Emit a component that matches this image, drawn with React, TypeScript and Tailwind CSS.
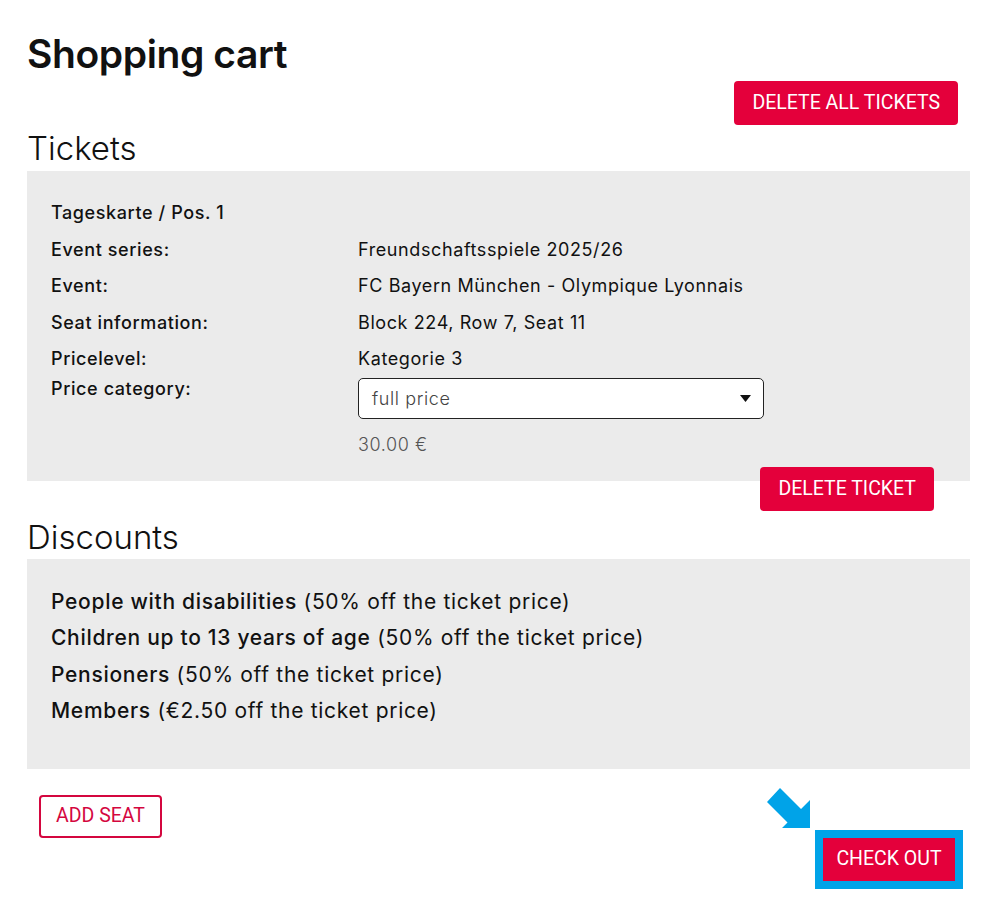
import React from "react";

const ROWS: [string, string][] = [
  ["Event series:", "Freundschaftsspiele 2025/26"],
  ["Event:", "FC Bayern München - Olympique Lyonnais"],
  ["Seat information:", "Block 224, Row 7, Seat 11"],
  ["Pricelevel:", "Kategorie 3"],
];

const DISCOUNTS: [string, string][] = [
  ["People with disabilities", "(50% off the ticket price)"],
  ["Children up to 13 years of age", "(50% off the ticket price)"],
  ["Pensioners", "(50% off the ticket price)"],
  ["Members", "(€2.50 off the ticket price)"],
];

const btnFont = { fontFamily: "Roboto, 'Liberation Sans', sans-serif" };

export default function App() {
  return (
    <div
      className="min-h-screen bg-white pl-[27px] pr-[30px] pt-[30px] text-[#111]"
      style={{ fontFamily: "Inter, 'Noto Sans', sans-serif" }}
    >
      {/* Title */}
      <h1 className="text-[39px] leading-[48px] font-semibold tracking-[-0.4px]">Shopping cart</h1>

      <div className="flex justify-end mt-[3px] pr-[12px]">
        <button
          className="h-[44px] px-[18px] rounded-[4px] bg-[#e4003b] text-white text-[19.5px] uppercase"
          style={btnFont}
        >
          Delete all tickets
        </button>
      </div>

      {/* ── Tickets ─────────────────────────────── */}
      <h2 className="mt-[3px] mb-[3px] text-[33px] leading-[40px] font-light">Tickets</h2>
      <div className="bg-[#ebebeb] pl-[24px] pt-[24px] pb-[25px] tracking-[0.6px]">
        <p className="text-[18px] leading-[36.5px] font-medium">Tageskarte / Pos. 1</p>
        {ROWS.map(([label, value]) => (
          <div key={label} className="flex text-[18px] leading-[36.5px]">
            <span className="w-[307px] font-medium">{label}</span>
            <span>{value}</span>
          </div>
        ))}
        <div className="flex text-[18px]">
          <span className="w-[307px] font-medium leading-[22px]">Price category:</span>
          <div>
            <div className="w-[406px] h-[41px] bg-white border-[1.5px] border-[#222] rounded-[5px] flex items-center justify-between pl-[13px] pr-[12px]">
              <span className="font-light text-[#444]">full price</span>
              <svg width="11" height="7" viewBox="0 0 11 7">
                <polygon points="0,0 11,0 5.5,7" fill="#111" />
              </svg>
            </div>
            <p className="mt-[15px] leading-[22px] font-light text-[#555]">30.00 €</p>
          </div>
        </div>
      </div>
      <div className="flex justify-end -mt-[14px] pr-[36px]">
        <button
          className="h-[44px] px-[18px] rounded-[4px] bg-[#e4003b] text-white text-[19.5px] uppercase"
          style={btnFont}
        >
          Delete ticket
        </button>
      </div>

      {/* ── Discounts ───────────────────────────── */}
      <h2 className="mt-[6px] mb-[2px] text-[33px] leading-[40px] font-light">Discounts</h2>
      <div className="bg-[#ebebeb] pl-[24px] pt-[25px] pb-[39px] tracking-[0.7px]">
        {DISCOUNTS.map(([b, rest]) => (
          <p key={b} className="text-[21px] leading-[36.5px]">
            <span className="font-medium">{b}</span> {rest}
          </p>
        ))}
      </div>

      {/* ── Bottom actions ──────────────────────── */}
      <div className="flex justify-between items-start mt-[19px] pl-[12px] pr-[7px]">
        <button
          className="mt-[7px] h-[43px] w-[123px] rounded-[4px] border-2 border-[#d4073f] bg-white text-[#d4073f] text-[19.5px] uppercase"
          style={btnFont}
        >
          Add seat
        </button>
        <div className="flex items-start gap-[5px]">
          <svg width="43" height="40" viewBox="0 0 43 40">
            <polygon points="13,0 34,21 43,12 43,40 15,40 20.5,34.5 0,14" fill="#00a3e8" />
          </svg>
          <div className="mt-[42px] p-[8px] bg-[#00a3e8]">
            <button
              className="h-[43px] w-[132px] bg-[#e4003b] text-white text-[19.5px] uppercase"
              style={btnFont}
            >
              Check out
            </button>
          </div>
        </div>
      </div>
    </div>
  );
}
